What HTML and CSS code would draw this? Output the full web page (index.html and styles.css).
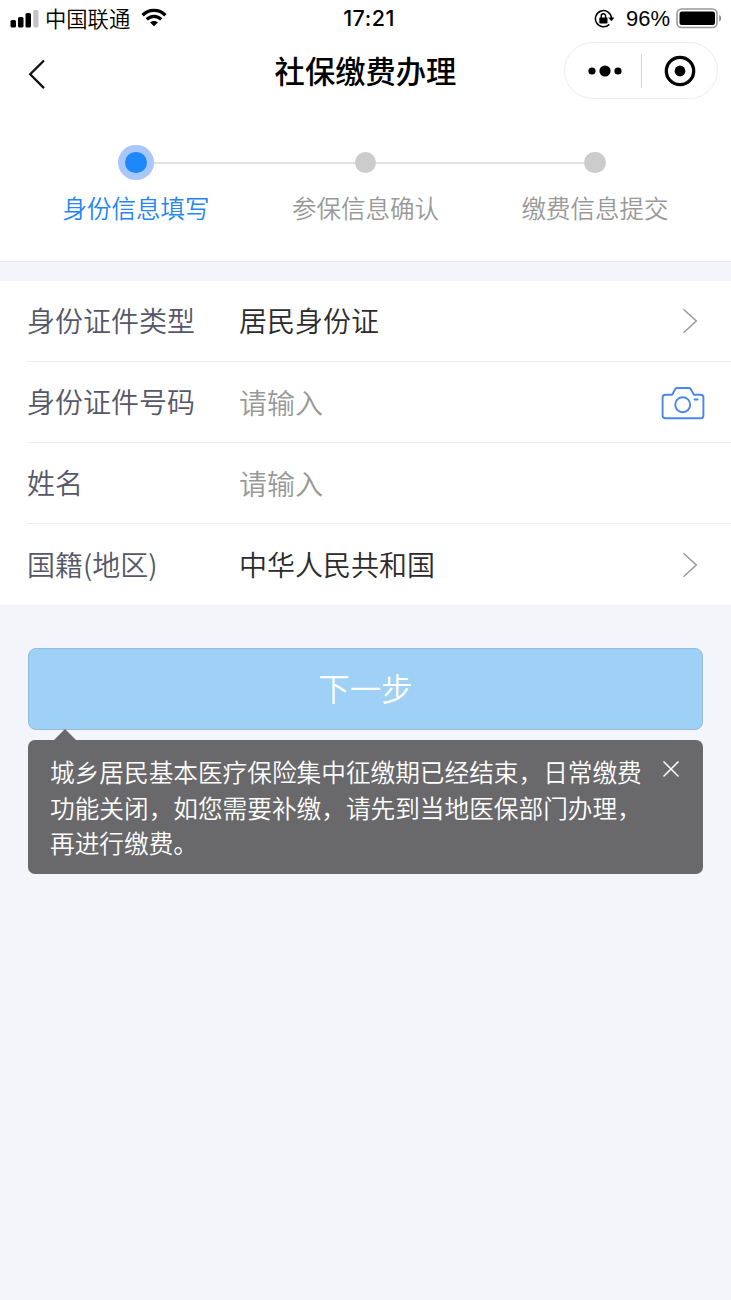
FILE: index.html
```html
<!DOCTYPE html>
<html lang="zh-CN">
<head>
    <meta charset="UTF-8">
    <meta name="viewport" content="width=device-width, initial-scale=1.0">
    <title>社保缴费办理</title>
    <link rel="stylesheet" href="styles.css">
</head>
<body>

    <div class="status-bar">
        <div class="status-left">
            <svg class="signal" width="29" height="19" viewBox="0 0 29 19">
                <rect x="0.5" y="11" width="5.5" height="7.5" rx="1.6"/>
                <rect x="8" y="8" width="5.5" height="10.5" rx="1.6"/>
                <rect x="15.5" y="4" width="5.5" height="14.5" rx="1.6"/>
                <rect x="23.3" y="1" width="5.2" height="17.5" rx="1.6" fill="#c4c4c4"/>
            </svg>
            <span class="carrier">中国联通</span>
            <svg class="wifi" width="26" height="19" viewBox="0 0 26 19">
                <path d="M1.6 7.2C8 .8 18 .8 24.4 7.2" fill="none" stroke="#000" stroke-width="3.4"/>
                <path d="M5.7 11.4c4.2-4.1 10.4-4.1 14.6 0" fill="none" stroke="#000" stroke-width="3.1"/>
                <path d="M13 18.3l-3.9-3.9c2.1-2 5.7-2 7.8 0z"/>
            </svg>
        </div>
        <div class="status-time">17:21</div>
        <div class="status-right">
            <svg class="lock" width="21" height="20" viewBox="0 0 21 20">
                <path d="M15.3 15.4A8.1 8.1 0 1 1 17.6 9.2" fill="none" stroke="#000" stroke-width="1.5"/>
                <path d="M14.3 8.6h6.2l-3.1 3.7z"/>
                <rect x="5.3" y="8.6" width="8.2" height="5.9" rx=".8"/>
                <path d="M7.2 9V7a2.2 2.2 0 0 1 4.4 0v2" fill="none" stroke="#000" stroke-width="1.4"/>
            </svg>
            <span class="percent">96%</span>
            <svg class="battery" width="46" height="21" viewBox="0 0 46 21">
                <rect x="1" y="1" width="40" height="18.5" rx="4.5" fill="none" stroke="#999" stroke-width="1.6"/>
                <rect x="3.5" y="3.5" width="35.5" height="13.5" rx="2.5"/>
                <path d="M43.2 7c2.6 1 2.6 5.5 0 6.5z" fill="#888"/>
            </svg>
        </div>
    </div>

    <div class="header">
        <svg class="back" width="18" height="32" viewBox="0 0 18 32">
            <path d="M16 2.5L2.2 16.3 16 30.1" fill="none" stroke="#111" stroke-width="2.3"/>
        </svg>
        <h1>社保缴费办理</h1>
        <div class="capsule">
            <svg width="36" height="14" viewBox="0 0 36 14">
                <circle cx="5" cy="7" r="3.6"/>
                <circle cx="18" cy="7" r="5.6"/>
                <circle cx="31" cy="7" r="3.6"/>
            </svg>
            <span class="capsule-line"></span>
            <svg width="32" height="32" viewBox="0 0 32 32">
                <circle cx="16" cy="16" r="13.7" fill="none" stroke="#000" stroke-width="3.3"/>
                <circle cx="16" cy="16" r="5.4"/>
            </svg>
        </div>
    </div>

    <div class="steps">
        <div class="step active">
            <div class="dot"></div>
            <span>身份信息填写</span>
        </div>
        <div class="step">
            <div class="dot"></div>
            <span>参保信息确认</span>
        </div>
        <div class="step">
            <div class="dot"></div>
            <span>缴费信息提交</span>
        </div>
    </div>

    <form class="info-form">
        <div class="row">
            <label>身份证件类型</label>
            <span class="value">居民身份证</span>
            <svg class="arrow" width="16" height="26" viewBox="0 0 16 26">
                <path d="M1.5 1.3L14.3 13 1.5 24.7" fill="none" stroke="#999" stroke-width="1.5"/>
            </svg>
        </div>
        <div class="row">
            <label>身份证件号码</label>
            <span class="value placeholder">请输入</span>
            <svg class="camera" width="44" height="34" viewBox="0 0 44 34">
                <g fill="none" stroke="#4a86ee" stroke-width="1.9" stroke-linejoin="round" stroke-linecap="round">
                    <path d="M4.3 8.7h6.8L14.3 3q.6-1 1.7-1h12q1.1 0 1.7 1l3.2 5.7h6.8q2.7 0 2.7 2.7v18.2q0 2.7-2.7 2.7H4.3q-2.7 0-2.7-2.7V11.4q0-2.7 2.7-2.7z"/>
                    <circle cx="21.7" cy="18.7" r="7.5"/>
                    <path d="M33.5 13.5h3.2"/>
                </g>
            </svg>
        </div>
        <div class="row">
            <label>姓名</label>
            <span class="value placeholder">请输入</span>
        </div>
        <div class="row">
            <label>国籍(地区)</label>
            <span class="value">中华人民共和国</span>
            <svg class="arrow" width="16" height="26" viewBox="0 0 16 26">
                <path d="M1.5 1.3L14.3 13 1.5 24.7" fill="none" stroke="#999" stroke-width="1.5"/>
            </svg>
        </div>
    </form>

    <div class="actions">
        <button type="button" class="next">下一步</button>
        <div class="tip">
            <p>城乡居民基本医疗保险集中征缴期已经结束，日常缴费<br>功能关闭，如您需要补缴，请先到当地医保部门办理，<br>再进行缴费。</p>
            <svg class="close" width="18" height="18" viewBox="0 0 18 18">
                <path d="M1.5 1.5l15 15M16.5 1.5l-15 15" fill="none" stroke="#fff" stroke-width="1.5"/>
            </svg>
        </div>
    </div>

</body>
</html>
```
FILE: styles.css
```css
* {
    box-sizing: border-box;
}

body {
    margin: 0;
    min-height: 1300px;
    background-color: #f3f5fa;
    font-family: "Noto Sans CJK SC", sans-serif;
    font-weight: 350;
}

svg {
    display: block;
    flex: none;
}

/* Status bar */
.status-bar {
    display: grid;
    grid-template-columns: 1fr auto 1fr;
    align-items: center;
    height: 37px;
    padding: 0 9px 0 10px;
    background-color: #fff;
    color: #000;
    font-weight: 400;
}

.status-left, .status-right {
    display: flex;
    align-items: center;
}

.status-right {
    justify-content: flex-end;
}

.carrier {
    margin: 0 11px 2px 6px;
    font-size: 21.3px;
    font-weight: 350;
    line-height: 35px;
}

.wifi {
    margin-bottom: 2px;
}

.status-time {
    margin: 0 0 1px 6px;
    font-family: Inter, sans-serif;
    font-size: 21.5px;
    font-weight: 500;
    letter-spacing: 0.5px;
}

.percent {
    margin: 0 6px 0 11px;
    font-family: "Liberation Sans", sans-serif;
    font-size: 22px;
}

/* Title bar */
.header {
    display: grid;
    grid-template-columns: 1fr auto 1fr;
    align-items: center;
    height: 71px;
    padding: 0 13px 0 28px;
    background-color: #fff;
}

.back {
    margin-top: 3px;
}

.header h1 {
    margin: 0 15px 5px 0;
    color: #000;
    font-size: 30.3px;
    font-weight: 500;
    line-height: 44px;
}

.capsule {
    display: flex;
    align-items: center;
    justify-self: end;
    justify-content: space-between;
    width: 154px;
    height: 57px;
    margin-bottom: 4px;
    padding: 0 21px 0 22px;
    border: 1px solid #ededed;
    border-radius: 29px;
}

.capsule-line {
    width: 1px;
    height: 34px;
    margin-right: 4px;
    background-color: #d5d5d5;
}

/* Progress steps */
.steps {
    display: flex;
    justify-content: center;
    height: 154px;
    padding-top: 36px;
    border-bottom: 1px solid #e6e7eb;
    background-color: #fff;
}

.step {
    position: relative;
    display: flex;
    flex-direction: column;
    align-items: center;
    width: 229.5px;
    color: #999;
    font-size: 24.5px;
    line-height: 36px;
}

.step + .step::before {
    content: "";
    position: absolute;
    top: 17.5px;
    right: 50%;
    width: 100%;
    height: 2px;
    background-color: #e2e2e2;
}

.dot {
    position: relative;
    z-index: 1;
    width: 21.5px;
    height: 21.5px;
    margin: 7.5px 0 17px;
    border-radius: 50%;
    background-color: #ccc;
}

.active {
    color: #2385f8;
    z-index: 1;
}

.active .dot {
    background-color: #1e87fa;
    box-shadow: 0 0 0 7px #a8c8fb;
}

/* Form rows */
.info-form {
    margin-top: 19px;
    background-color: #fff;
}

.row {
    display: flex;
    align-items: center;
    height: 81px;
    margin-left: 27px;
    padding-right: 26px;
    border-bottom: 1px solid #ededed;
    font-size: 28px;
    line-height: 42px;
}

.row:last-child {
    border-bottom: none;
}

.row label {
    width: 212px;
    padding-bottom: 2px;
    color: #555768;
}

.value {
    flex: 1;
    padding-bottom: 2px;
    color: #2b2b2b;
}

.placeholder {
    padding-bottom: 0;
    color: #999;
}

.arrow {
    margin-right: 7px;
}

.camera {
    margin-top: 2px;
}

/* Button and notice */
.actions {
    padding: 43px 28px 0;
}

.next {
    display: block;
    width: 100%;
    height: 82px;
    padding: 0 0 5px;
    border: 1px solid #91bdda;
    border-radius: 8px;
    background-color: #9fd0f6;
    color: #fff;
    font-family: inherit;
    font-size: 31.5px;
    font-weight: 350;
}

.tip {
    position: relative;
    display: flex;
    justify-content: space-between;
    height: 134px;
    margin-top: 10px;
    padding: 14px 23px 0 22px;
    border-radius: 7px;
    background-color: #69696b;
    color: #fff;
    font-size: 24.67px;
    line-height: 35.5px;
}

.tip::before {
    content: "";
    position: absolute;
    left: 26px;
    top: -11px;
    border: 11px solid transparent;
    border-top: none;
    border-bottom-color: #69696b;
}

.tip p {
    margin: 0;
    white-space: nowrap;
}

.close {
    margin-top: 6px;
}
```
